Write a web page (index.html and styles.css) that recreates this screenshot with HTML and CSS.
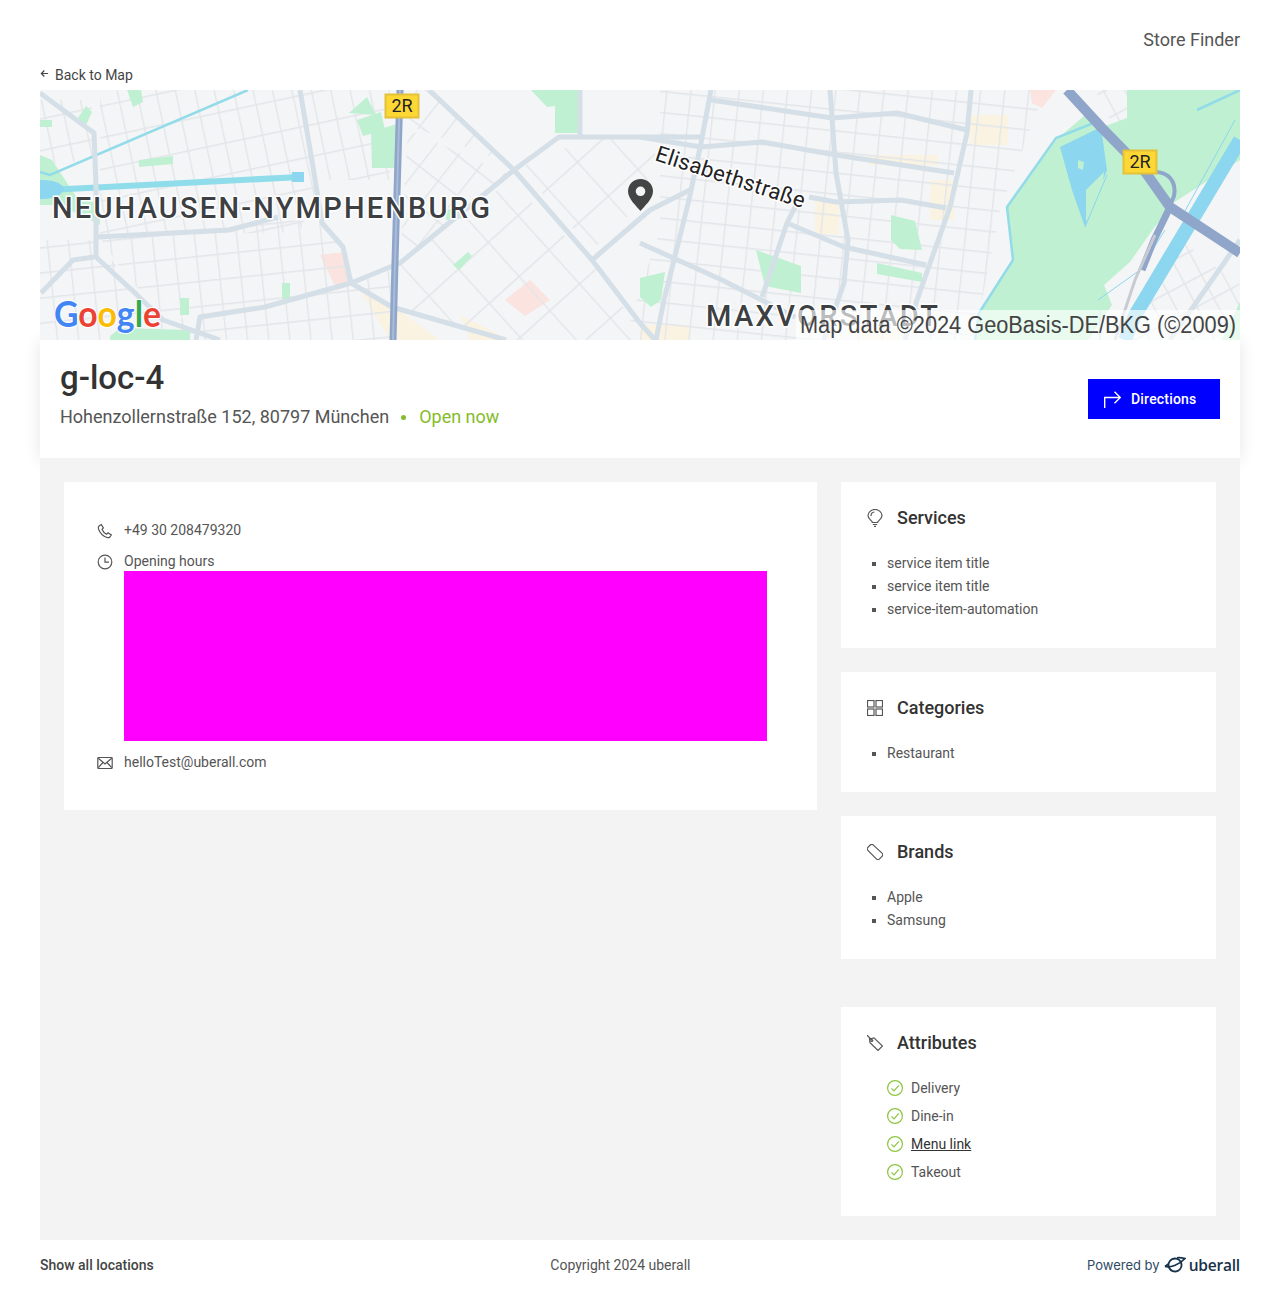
FILE: index.html
```html
<!DOCTYPE html>
<html>
<head>
  <title>g-loc-4 - Store Finder</title>
  <meta charset="UTF-8">
  <meta name="viewport" content="width=device-width, initial-scale=1.0">
  <link rel="stylesheet" href="styles.css">
</head>
<body>
  <header class="top">
    <div class="brand">Store Finder</div>
    <a class="back" href="#">
      <svg class="back-arrow" viewBox="0 0 10 10"><path d="M9 5H1.500M4.800 1.700 1.500 5l3.300 3.300"/></svg>
      Back to Map
    </a>
  </header>

  <!-- map: page coordinates, so x/y read straight from the screenshot -->
  <svg class="map" viewBox="40 90 1200 250" preserveAspectRatio="none">
    <defs>
      <pattern id="st-a" width="19" height="31" patternUnits="userSpaceOnUse" patternTransform="rotate(-12)"><path class="street" d="M0 .7H19M.7 0V31"/></pattern>
      <pattern id="st-b" width="24" height="32" patternUnits="userSpaceOnUse" patternTransform="rotate(38)"><path class="street" d="M0 .7H24M.7 0V32"/></pattern>
      <pattern id="st-c" width="21" height="25" patternUnits="userSpaceOnUse" patternTransform="rotate(-6)"><path class="street" d="M0 .7H21M.7 0V25"/></pattern>
      <pattern id="st-d" width="24" height="21" patternUnits="userSpaceOnUse" patternTransform="rotate(6)"><path class="street" d="M0 .7H24M.7 0V21"/></pattern>
      <pattern id="st-e" width="40" height="46" patternUnits="userSpaceOnUse" patternTransform="rotate(-42)"><path class="street" d="M0 .7H40M.7 0V46"/></pattern>
      <pattern id="st-f" width="19" height="26" patternUnits="userSpaceOnUse" patternTransform="rotate(-28)"><path class="street" d="M0 .7H19M.7 0V26"/></pattern>
    </defs>
    <rect class="land" x="40" y="90" width="1200" height="250"/>

    <!-- warm and pink patches -->
    <path class="warm" d="M815 200h24v34h-24zM970 115h38v30h-38zM868 155h70v10h-70zM930 180h24v40h-24zM360 290l30 14 50 36h-50zM460 315l50 25h-40zM640 325h50v15h-50zM860 325h40v15h-40z"/>
    <path class="pink" d="M320 255l24-3 5 33-12 5zM505 300l25-20 20 20-25 16zM1030 90h26l-14 18-10-5z"/>

    <!-- street districts -->
    <path fill="url(#st-a)" d="M100 90H390V180H320L300 232 100 236z"/>
    <path fill="url(#st-a)" d="M40 100H92V160L40 165z"/>
    <path fill="url(#st-b)" d="M408 130 510 175 400 262z"/>
    <path fill="url(#st-b)" d="M402 90H429L500 160 408 125z"/>
    <path fill="url(#st-c)" d="M40 240H96L160 320 200 316 265 305 350 282 395 262V340H40z"/>
    <path fill="url(#st-c)" d="M100 238 230 232 280 218 322 225 345 250 350 280 265 305 200 316 165 316 125 275z"/>
    <path fill="url(#st-d)" d="M660 90H1045L1000 210 980 310 975 340H640L630 320 660 230z"/>
    <path fill="url(#st-e)" d="M400 265 510 180 590 262 640 330V340H500L395 305z"/>
    <path fill="url(#st-e)" d="M590 137H660L640 205 592 250 520 168z"/>
    <path fill="url(#st-f)" d="M1180 240 1240 285V340H1125z"/>
    <path fill="url(#st-f)" d="M1095 90H1127V122L1118 135z"/>

    <!-- parks -->
    <path class="park" d="M1085 115 1056 140 1007 207 1013 260 979 313 975 340H1088L1112 305 1104 285 1130 262 1170 205 1240 160V90H1127V118L1100 128z"/>
    <path class="park" d="M40 155 52 160 75 195 100 205 100 225 60 205 40 205zM127 90h14l2 12-10 5zM349 113l18-16 9 18zM357 120l24-8 4 18-22 6zM371 132l26-8v44h-25zM531 90h49v43h-25v-27l-8 1zM40 120h12v7H40zM78 118l8-12 6 6-6 13zM139 160l34-4v8l-34 3zM453 265l15-13 4 4-13 14zM282 283h8v18h-8zM180 298h9v17h-9zM110 336l10-8 70 2v10h-80zM891 215l24 6 7 29-22-1-9-9zM756 250l45 16v27l-36-7zM877 263l45 10v9l-45-8zM640 278l25-6-4 28-10 7-11-10zM446 210l20-4-2 12-18 2zM1222 340l18-38v38zM1143 218h20l-18 18z"/>

    <!-- water -->
    <path class="water-line thin" d="M40 172 50 175 248 90"/>
    <path class="water-line wide" d="M48 190 300 177"/>
    <path class="water-fill" d="M40 180c12 0 22 2 24 9-3 8-12 10-24 10zM292 172h12v10h-12zM1060 147 1101 127 1107 170 1085 227 1072 190z"/>
    <path class="park" d="M1078 160l6 2-1 8-5-2zM1086 190l18-18-2 22-16 28z"/>
    <path class="water-line river" d="M1240 140 1134 317 1125 340"/>
    <path class="water-line thin" d="M1101 120 1056 138 1007 207 1013 260 979 313 975 340M1197 110 1240 90"/>
    <path class="water-line hair" d="M1180 220 1235 120M1098 300 1140 270 1165 230M1100 310V340M1085 227 1107 175"/>

    <!-- main roads -->
    <g class="road">
      <path d="M40 93 94 133 96 187V257L135 293 163 320 220 340"/>
      <path d="M98 237 229 230 278 217"/>
      <path d="M94 257 73 260 41 293"/>
      <path d="M429 90 514 170 592 260 640 323 655 340"/>
      <path d="M700 137H640 559L514 170 449 223 400 263 351 283 265 307 200 317 196 340"/>
      <path d="M300 90 314 173 322 223 343 247 351 283 392 307 506 340"/>
      <path d="M580 90V137"/>
      <path d="M711 90 701 143 689 200 664 300 656 340"/>
      <path d="M640 137 701 147 762 142 836 155 954 173"/>
      <path d="M711 100 832 118 897 113 967 130"/>
      <path d="M830 90 836 173 848 240 844 283 824 340"/>
      <path d="M971 90 967 133 950 207 917 300 905 340"/>
      <path d="M809 197 836 202 901 200 946 208"/>
      <path d="M797 203 787 223 762 297"/>
      <path d="M787 223 844 247 926 265"/>
      <path d="M640 243 722 280 795 317"/>
      <path d="M592 260 650 210 690 190"/>
      <path d="M1240 240 1170 340"/>
    </g>

    <!-- motorway -->
    <g class="motorway">
      <path d="M400 90 395 262 393 340"/>
      <path class="mw-wide" d="M1067 90 1101 127 1146 173 1170 207 1240 253"/>
      <path d="M1170 207 1154 240 1142 270"/>
      <path class="mw-ramp" d="M1155 172c12 0 22 8 19 24l-5 12"/>
    </g>
    <path class="mw-centre" d="M400 90 395 262 393 340"/>
    <path class="grey-rail" d="M1155 235 1135 280 1115 340"/>

    <text class="area" x="52" y="218" textLength="438">NEUHAUSEN-NYMPHENBURG</text>
    <text class="street-name" x="0" y="0" transform="translate(654 160) rotate(18)" textLength="156">Elisabethstraße</text>
    <text class="area" x="706" y="326" textLength="232">MAXVORSTADT</text>

    <g class="shield">
      <rect x="385.500" y="94.500" width="33" height="23"/>
      <rect x="1123.500" y="150.500" width="33" height="23"/>
    </g>
    <text class="shield-text" x="402" y="112">2R</text>
    <text class="shield-text" x="1140" y="168">2R</text>

    <path class="pin" fill-rule="evenodd" d="M640.500 179c-7 0-12.500 5.300-12.500 12.200 0 7.800 9 15.300 12.500 19.800 3.500-4.500 12.500-12 12.500-19.800 0-6.900-5.500-12.200-12.500-12.200zm0 7.500a4.800 4.800 0 1 1 0 9.600 4.800 4.800 0 0 1 0-9.600z"/>

    <text class="google" x="54" y="327" textLength="107" lengthAdjust="spacingAndGlyphs"><tspan fill="#4285f4">G</tspan><tspan fill="#ea4335">o</tspan><tspan fill="#fbbc05">o</tspan><tspan fill="#4285f4">g</tspan><tspan fill="#34a853">l</tspan><tspan fill="#ea4335">e</tspan></text>

    <rect class="attr-strip" x="796" y="310" width="444" height="30"/>
    <text class="attr-text" x="800" y="333" textLength="436" lengthAdjust="spacingAndGlyphs">Map data ©2024 GeoBasis-DE/BKG (©2009)</text>
  </svg>

  <section class="info">
    <div class="info-text">
      <h1>g-loc-4</h1>
      <div class="address">
        <span>Hohenzollernstraße 152, 80797 München</span>
        <span class="dot"></span>
        <span class="open">Open now</span>
      </div>
    </div>
    <a class="directions" href="#">
      <svg class="directions-icon" viewBox="0 0 17 17"><path d="M.7 17V6.500H16M10.500 .7 16.300 6.500 10.500 12.300"/></svg>
      Directions
    </a>
  </section>

  <main class="content">
    <section class="card details">
      <div class="row">
        <svg class="icon" viewBox="0 0 16 16"><path d="M4.300 1.600 2 3c-.8.600-.9 1.800-.4 3.200 1.500 3.900 4.400 6.900 8.400 8.300 1.200.4 2.200.2 2.800-.5l1.500-2-3.300-2.200-1.500 1.400C7.600 10.300 5.800 8.400 5 6.300L6.400 5z"/></svg>
        <span>+49 30 208479320</span>
      </div>
      <div class="row hours">
        <svg class="icon" viewBox="0 0 16 16"><circle cx="8" cy="8" r="6.800"/><path d="M8 3.500V8.200H12"/></svg>
        <div class="hours-body">
          <div>Opening hours</div>
          <div class="hours-block"></div>
        </div>
      </div>
      <div class="row">
        <svg class="icon" viewBox="0 0 16 16"><rect x=".8" y="2.500" width="14.400" height="11" rx=".8"/><path d="M1.300 3.300 8 9 14.700 3.300M1.300 12.700 6 7.500M14.700 12.700 10 7.500"/></svg>
        <span>helloTest@uberall.com</span>
      </div>
    </section>

    <aside class="side">
      <section class="card">
        <h2>
          <svg class="icon icon-tall" viewBox="0 0 16 18"><path d="M5.500 13.500C5 11.500 1 10 1 6.800a7 6.300 0 0 1 14 0c0 3.200-4 4.700-4.500 6.700zM5.800 15.500h4.400M7 17.300h2M4 7c0-2.200 1.500-3.800 3.500-4"/></svg>
          Services
        </h2>
        <ul>
          <li>service item title</li>
          <li>service item title</li>
          <li>service-item-automation</li>
        </ul>
      </section>
      <section class="card">
        <h2>
          <svg class="icon" viewBox="0 0 16 16"><rect x=".5" y=".5" width="6.500" height="6.500"/><rect x="9" y=".5" width="6.500" height="6.500"/><rect x=".5" y="9" width="6.500" height="6.500"/><rect x="9" y="9" width="6.500" height="6.500"/></svg>
          Categories
        </h2>
        <ul>
          <li>Restaurant</li>
        </ul>
      </section>
      <section class="card">
        <h2>
          <svg class="icon" viewBox="0 0 16 16"><path d="M.9 3.300 3.200 1C4.100.2 5.300.2 6.100.9l8.900 8.200c.9.900.9 2.300 0 3.200l-2.500 2.500c-.9.900-2.300.9-3.200 0L.9 6.400C.1 5.600.1 4.200.9 3.300z"/></svg>
          Brands
        </h2>
        <ul>
          <li>Apple</li>
          <li>Samsung</li>
        </ul>
      </section>
      <section class="card card-apart">
        <h2>
          <svg class="icon" viewBox="0 0 16 16"><path d="M2.500 4 7 2.800 15.500 11 11 15.500 3 7.800zM0 0l4.600 5"/><circle cx="4.800" cy="5.500" r="1"/></svg>
          Attributes
        </h2>
        <div class="attrs">
          <div class="attr"><svg class="check" viewBox="0 0 16 16"><circle cx="8" cy="8" r="7.400"/><path d="M4.500 8.300 7 10.800 11.800 5.300"/></svg>Delivery</div>
          <div class="attr"><svg class="check" viewBox="0 0 16 16"><circle cx="8" cy="8" r="7.400"/><path d="M4.500 8.300 7 10.800 11.800 5.300"/></svg>Dine-in</div>
          <div class="attr"><svg class="check" viewBox="0 0 16 16"><circle cx="8" cy="8" r="7.400"/><path d="M4.500 8.300 7 10.800 11.800 5.300"/></svg><a href="#">Menu link</a></div>
          <div class="attr"><svg class="check" viewBox="0 0 16 16"><circle cx="8" cy="8" r="7.400"/><path d="M4.500 8.300 7 10.800 11.800 5.300"/></svg>Takeout</div>
        </div>
      </section>
    </aside>
  </main>

  <footer class="foot">
    <a class="all" href="#">Show all locations</a>
    <span>Copyright 2024 uberall</span>
    <span class="powered">
      Powered by
      <svg class="planet" viewBox="0 0 22 18"><ellipse cx="11" cy="9" rx="6.500" ry="6.500" transform="rotate(-25 11 9)"/><path class="ring" d="M1 10.500C6 12 15 9 21 2.500 17 1.500 15 1.500 13 1.800M1 10.500l3.500-2.500"/></svg>
      <span class="uberall">uberall</span>
    </span>
  </footer>
</body>
</html>
```
FILE: styles.css
```css
body {
  margin: 0;
  padding: 0 40px 20px;
  background: #fff;
  color: #555;
  font-family: Roboto, "Liberation Sans", sans-serif;
  font-size: 14px;
}
a {
  color: inherit;
  text-decoration: none;
}

/* header */
.top {
  padding-top: 29px;
}
.brand {
  text-align: right;
  font-size: 18px;
  line-height: 22px;
  color: #555;
}
.back {
  display: flex;
  align-items: center;
  gap: 6px;
  height: 20px;
  margin-top: 14px;
  margin-bottom: 5px;
  color: #444;
  line-height: 20px;
}
.back-arrow {
  width: 9px;
  height: 9px;
  margin-top: -3px;
  fill: none;
  stroke: #444;
  stroke-width: 1.3;
}

/* map */
.map {
  position: relative;
  z-index: 1;
  display: block;
  width: 1200px;
  height: 250px;
}
.land { fill: #f4f5f6; }
.street { fill: none; stroke: #e2e5e9; stroke-width: 1.4; }
.warm { fill: #fbf3dd; fill-opacity: .8; }
.pink { fill: #fbe3df; }
.park { fill: #bff0d2; }
.water-fill { fill: #8cd6ef; }
.water-line { fill: none; stroke: #8cd6ef; }
.water-line.thin { stroke-width: 2.5; stroke: #92dbe9; }
.water-line.wide { stroke-width: 6; stroke: #8fdcea; }
.water-line.river { stroke-width: 14; }
.water-line.hair { stroke-width: 1; }
.road path { fill: none; stroke: #d5dfe7; stroke-width: 5; stroke-linejoin: round; }
.motorway path { fill: none; stroke: #8fa5c9; stroke-width: 7; stroke-linejoin: round; }
.motorway .mw-wide { stroke-width: 10; }
.motorway .mw-ramp { stroke-width: 4; }
.mw-centre { fill: none; stroke: #a9bcd8; stroke-width: 2; }
.grey-rail { fill: none; stroke: #c8ccd2; stroke-width: 3; }
.area {
  font-size: 29px;
  font-weight: 500;
  fill: #3c4043;
  stroke: #fff;
  stroke-width: 3px;
  paint-order: stroke;
}
.street-name {
  font-size: 22px;
  fill: #222;
  stroke: #fff;
  stroke-width: 3px;
  paint-order: stroke;
}
.shield rect { fill: #fdd835; stroke: #e3c23a; stroke-width: 2; }
.shield-text { font-size: 18px; fill: #222; text-anchor: middle; }
.pin { fill: #444; }
.google {
  font-family: Lato, Roboto, sans-serif;
  font-size: 37px;
  font-weight: 700;
  stroke: #fff;
  stroke-width: 2px;
  paint-order: stroke;
}
.attr-strip { fill: #fff; fill-opacity: .65; }
.attr-text {
  font-family: "Liberation Sans", sans-serif;
  font-size: 23px;
  fill: #444;
}

/* location summary */
.info {
  display: flex;
  align-items: center;
  justify-content: space-between;
  height: 118px;
  padding: 0 20px;
  box-sizing: border-box;
  background: #fff;
  box-shadow: 0 2px 16px rgba(0,0,0,.1);
}
.info-text {
  margin-bottom: 12px;
}
h1 {
  margin: 0 0 7px;
  font-size: 33px;
  font-weight: 500;
  line-height: 40px;
  color: #333;
}
.address {
  display: flex;
  align-items: center;
  font-size: 18px;
  line-height: 24px;
}
.dot {
  width: 5px;
  height: 5px;
  margin: 1px 13px 0 12px;
  border-radius: 50%;
  background: #85bc2b;
}
.open { color: #85bc2b; }
.directions {
  display: flex;
  align-items: center;
  gap: 10px;
  width: 132px;
  height: 40px;
  padding-left: 16px;
  box-sizing: border-box;
  background: #00f;
  color: #fff;
  font-weight: 500;
  letter-spacing: .2px;
}
.directions-icon {
  width: 17px;
  height: 17px;
  fill: none;
  stroke: #fff;
  stroke-width: 1.4;
}

/* content */
.content {
  display: grid;
  grid-template-columns: 753px 375px;
  gap: 24px;
  align-items: start;
  padding: 24px;
  background: #f3f3f3;
}
.card {
  padding: 24px 26px 28px;
  background: #fff;
}
.icon {
  flex: none;
  width: 16px;
  height: 16px;
  fill: none;
  stroke: #555;
  stroke-width: 1.2;
}
.icon-tall { height: 18px; }
.details {
  display: flex;
  flex-direction: column;
  gap: 11px;
  padding: 38px 50px 38px 33px;
  color: #555;
  line-height: 20px;
}
.row {
  display: flex;
  gap: 11px;
}
.row .icon { margin-top: 3px; }
.hours-body { flex: 1; }
.hours-block {
  height: 170px;
  background: #f0f;
}
.side {
  display: flex;
  flex-direction: column;
  gap: 24px;
}
.card-apart { margin-top: 24px; }
h2 {
  display: flex;
  align-items: center;
  gap: 14px;
  margin: 0;
  font-size: 18px;
  font-weight: 500;
  line-height: 24px;
  color: #333;
}
ul {
  margin: 22px 0 -1px;
  padding: 0;
  list-style: none;
  line-height: 23px;
}
li {
  display: flex;
  align-items: center;
  gap: 11px;
}
li::before {
  content: "";
  width: 4px;
  height: 4px;
  margin-left: 5px;
  background: #555;
}
.attrs {
  display: flex;
  flex-direction: column;
  margin-top: 19px;
  margin-bottom: 2px;
  padding-left: 20px;
}
.attr {
  display: flex;
  align-items: center;
  gap: 8px;
  height: 28px;
}
.attr a {
  color: #333;
  text-decoration: underline;
}
.check {
  width: 16px;
  height: 16px;
  fill: none;
  stroke: #8cc63f;
  stroke-width: 1.2;
}

/* footer */
.foot {
  display: flex;
  align-items: center;
  justify-content: space-between;
  height: 50px;
}
.all {
  color: #444;
  font-weight: 500;
}
.powered {
  display: flex;
  align-items: center;
  gap: 4px;
  font-family: Inter, Roboto, sans-serif;
  font-size: 13px;
  color: #2d4a63;
}
.planet {
  width: 22px;
  height: 18px;
  fill: none;
  stroke: #17324a;
  stroke-width: 1.8;
}
.uberall {
  margin-left: -1px;
  font-family: "Open Sans", Roboto, sans-serif;
  font-size: 15.5px;
  font-weight: 600;
  letter-spacing: -.2px;
  color: #17324a;
}
```
